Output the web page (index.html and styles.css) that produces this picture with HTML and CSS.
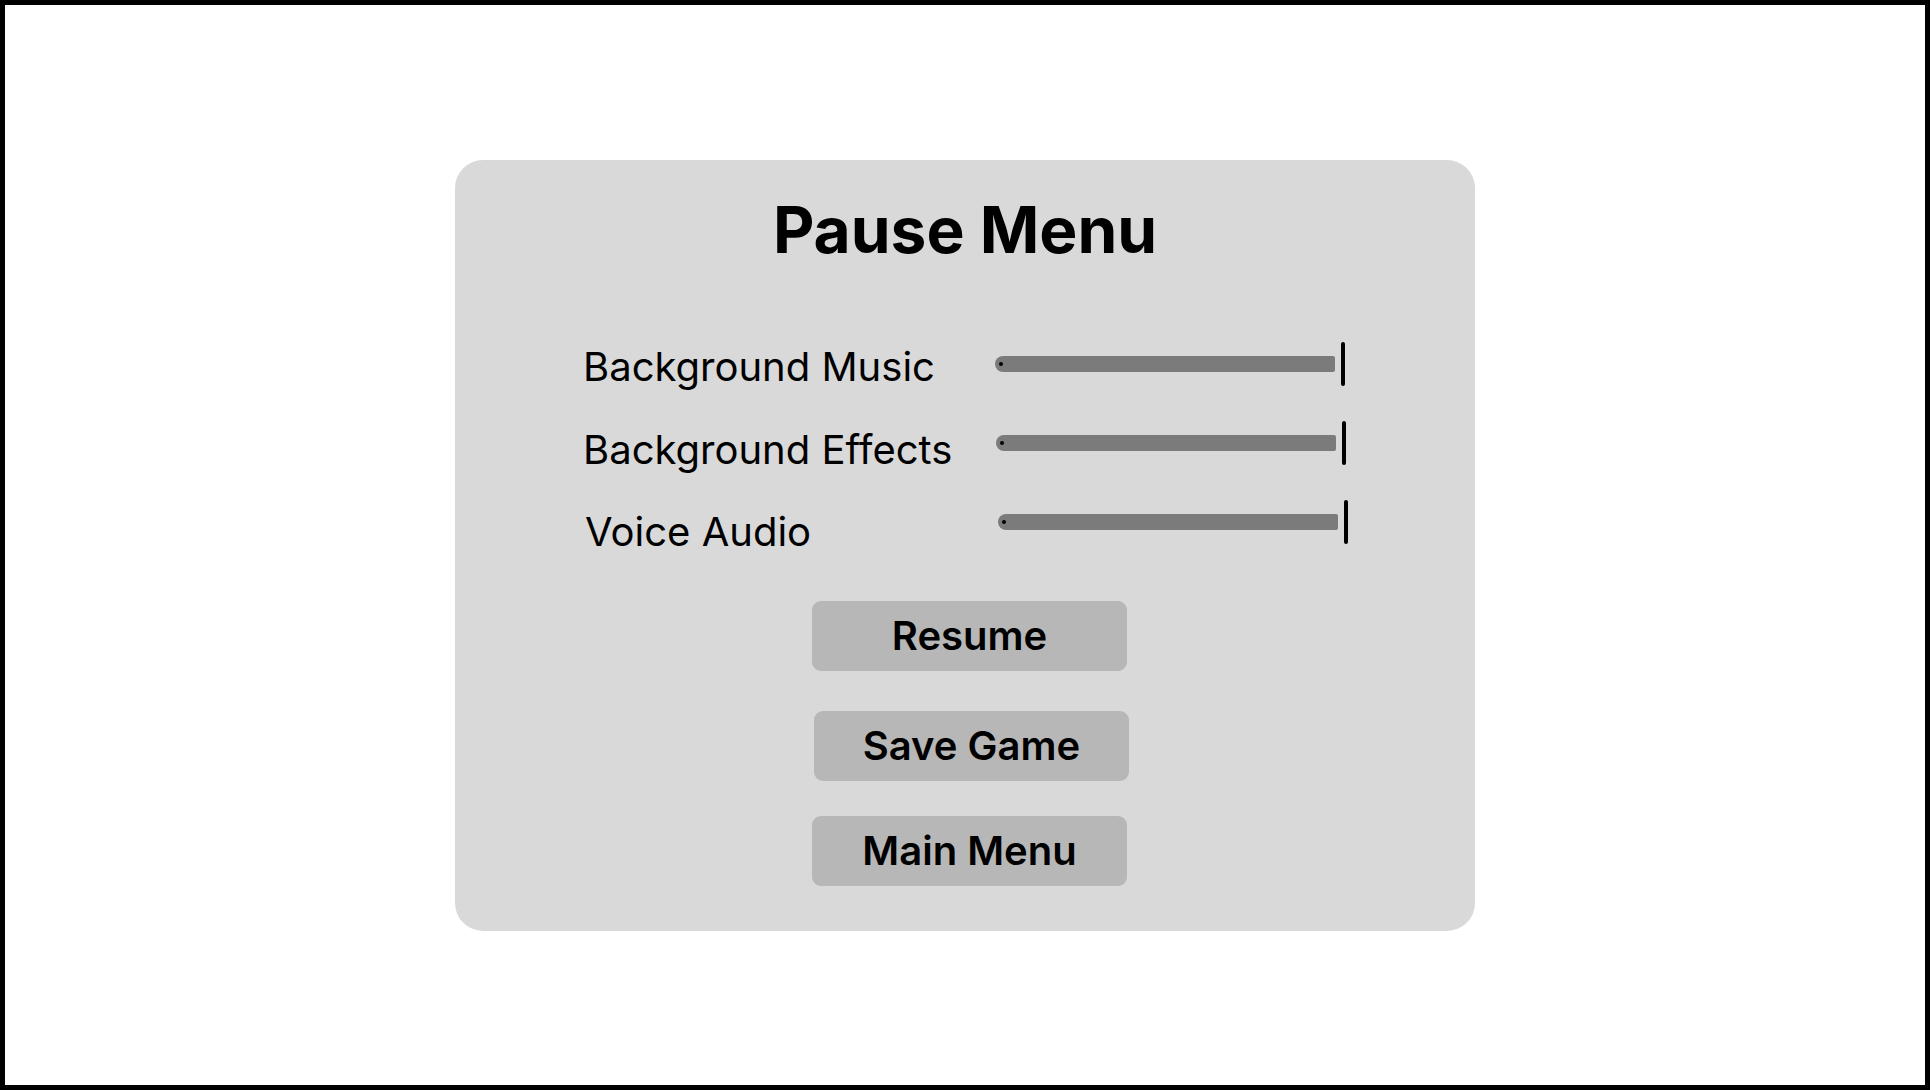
FILE: index.html
```html
<!DOCTYPE html>
<html lang="en">
<head>
<meta charset="utf-8">
<title>Pause Menu</title>
<link rel="stylesheet" href="styles.css">
</head>
<body>
<div class="frame">
  <section class="panel">
    <h1 class="title">Pause Menu</h1>
    <div class="settings">
      <div class="labels">
        <div class="label">Background Music</div>
        <div class="label">Background Effects</div>
        <div class="label label-voice">Voice Audio</div>
      </div>
      <div class="sliders">
        <div class="slider"><div class="track"><span class="dot"></span></div><span class="thumb"></span></div>
        <div class="slider slider-effects"><div class="track"><span class="dot"></span></div><span class="thumb"></span></div>
        <div class="slider slider-voice"><div class="track"><span class="dot"></span></div><span class="thumb"></span></div>
      </div>
    </div>
    <div class="buttons">
      <button class="btn">Resume</button>
      <button class="btn btn-save">Save Game</button>
      <button class="btn">Main Menu</button>
    </div>
  </section>
</div>
</body>
</html>
```
FILE: styles.css
```css
* { box-sizing: border-box; }
html, body { margin: 0; padding: 0; background: #fff; }
body { font-family: "Inter", "Noto Sans", sans-serif; color: #000; }

.frame {
  width: 1930px;
  height: 1090px;
  border: 5px solid #000;
  background: #fff;
  display: flex;
  justify-content: center;
  align-items: flex-start;
}

.panel {
  width: 1020px;
  height: 771px;
  margin-top: 155px;
  background: #d9d9d9;
  border-radius: 28px;
  padding-top: 38px;
  display: flex;
  flex-direction: column;
}

.title {
  margin: 0;
  font-size: 64px;
  line-height: 64px;
  font-weight: 700;
  text-align: center;
  letter-spacing: 0;
}

.settings {
  display: flex;
  align-items: flex-start;
  padding-left: 128px;
  margin-top: 80px;
}

.labels {
  width: 412px;
  padding-top: 5px;
  display: flex;
  flex-direction: column;
  gap: 42.5px;
}

.label {
  font-size: 40px;
  line-height: 40px;
  font-weight: 400;
  white-space: nowrap;
}

.label-voice { padding-left: 2px; }

.sliders {
  display: flex;
  flex-direction: column;
  gap: 35px;
}

.slider {
  display: flex;
  align-items: center;
  gap: 6px;
  height: 44px;
}

.slider-effects { margin-left: 1px; }
.slider-voice { margin-left: 3px; }

.track {
  width: 340px;
  height: 16px;
  background: #7b7b7b;
  border-radius: 8px 2px 2px 8px;
  display: flex;
  align-items: center;
  padding-left: 4px;
}

.dot {
  width: 4px;
  height: 4px;
  border-radius: 50%;
  background: #000;
}

.thumb {
  width: 4px;
  height: 44px;
  border-radius: 2px;
  background: #000;
}

.buttons {
  display: flex;
  flex-direction: column;
  align-items: center;
  padding-left: 9px;
  margin-top: 49px;
}

.btn {
  width: 315px;
  height: 70px;
  border: none;
  border-radius: 9px;
  background: #b7b7b7;
  font-family: "Inter", "Noto Sans", sans-serif;
  font-size: 40px;
  line-height: 70px;
  font-weight: 600;
  color: #000;
  padding: 0;
  text-align: center;
}

.btn-save {
  margin: 40px 0 35px 4px;
}
```
